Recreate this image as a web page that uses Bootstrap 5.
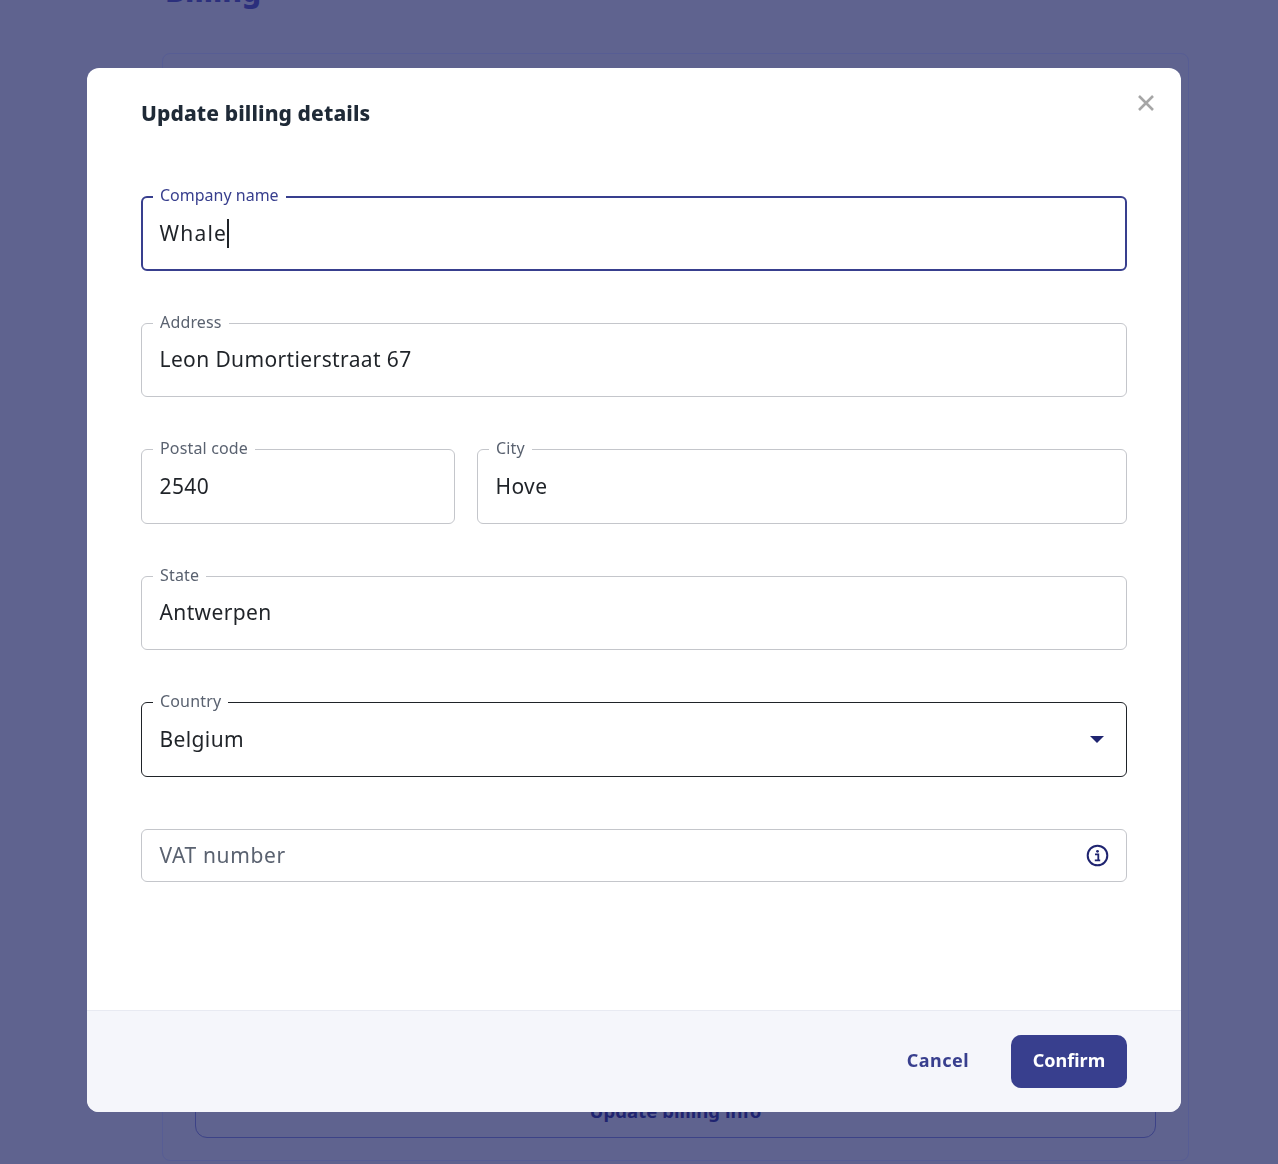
<!DOCTYPE html>
<html lang="en">
<head>
<meta charset="utf-8">
<title>Update billing details</title>
<link rel="stylesheet" href="https://cdn.jsdelivr.net/npm/bootstrap@5.3.0/dist/css/bootstrap.min.css">
<style>
html,body{height:1164px;overflow:hidden}
body{background:#5f638f;font-family:"Noto Sans","Liberation Sans",sans-serif;color:#1f2328}
.under{padding:0 89px 0 162px;height:1164px;display:flex;flex-direction:column}
.under-title{font-size:30px;font-weight:800;color:#2b2f7c;line-height:40px;height:40px;margin:-29px 0 42px 3px}
.under-card{height:1108px;border:1px solid #575d94;border-radius:8px;padding:0 32px 22px;display:flex;flex-direction:column;justify-content:flex-end}
.under-btn{height:54px;border:1px solid #3c4287;border-radius:12px;display:flex;justify-content:center;color:#1f2470;font-weight:700;font-size:18.5px;background:transparent;padding-top:12px;letter-spacing:.05px}
.bill-wrap{background:transparent}
.bill-dialog{width:1094px;max-width:none;margin:68px 0 0 87px}
.bill-content{border:0;border-radius:12px;height:1044px;overflow:hidden;background:#fff}
.bill-head{padding:31px 54px 0;border:0;height:128px;align-items:flex-start;display:block}
.bill-title{font-size:21px;font-weight:800;color:#1f2a37;line-height:28px;margin:0;letter-spacing:.1px}
.bill-x{position:absolute;top:21px;right:26px;width:18px;height:18px;border:0;background:none;padding:0;display:block}
.bill-body{padding:0 54px;flex:1 1 auto}
.fld{position:relative;height:74.5px;margin-bottom:52px;border:1px solid #c4c6cb;border-radius:6px;display:flex;align-items:center;padding:0 17.5px;font-size:21px;color:#1f2328;letter-spacing:.38px}
.fld-label{position:absolute;top:-11px;left:11px;padding:0 7px;background:#fff;font-size:16px;line-height:18px;color:#5a6270;letter-spacing:.16px}
.fld-focus{border:2px solid #383f8e;padding:0 16.5px}
.fld-focus .fld-label{color:#383f8e;left:10px;top:-12px;letter-spacing:0}
.val-wide{letter-spacing:1.2px}
.fld-dark{border-color:#1f2328}
.fld-vat{height:53px;margin:0;color:#5a6270;padding-top:1px;letter-spacing:.65px}
.caret-bar{display:inline-block;width:2px;height:29px;background:#1f2328;margin-left:0}
.fld-end{margin-left:auto;display:flex;margin-right:-.5px}
.fld-tri{margin-left:auto;margin-right:4.5px;width:0;height:0;border-left:7px solid transparent;border-right:7px solid transparent;border-top:7px solid #1f2470}
.bill-foot{height:102px;background:#f5f6fb;border-top:1px solid #e8eaf2;border-radius:0;padding:0 54px 0 0;display:flex;justify-content:flex-end;align-items:flex-start;flex-wrap:nowrap;gap:0}
.btn-cancel{font-weight:700;font-size:18px;color:#383f8e;background:none;border:0;margin:24px 42px 0 0;padding:0 0 2px;height:53px;letter-spacing:.45px}
.btn-confirm{font-weight:700;font-size:18px;color:#fff;background:#383f8e;border:0;border-radius:10px;width:116px;height:53px;margin:24px 0 0;padding:0 0 2px}
.btn-cancel:hover{color:#383f8e}.btn-confirm:hover{color:#fff;background:#383f8e}
.pc-col{width:314px}.city-col{margin-left:22px}
</style>
</head>
<body>
<div class="under">
  <div class="under-title">Billing</div>
  <div class="under-card">
    <div class="under-btn">Update billing info</div>
  </div>
</div>
<div class="modal d-block bill-wrap" tabindex="-1" role="dialog">
  <div class="modal-dialog bill-dialog">
    <div class="modal-content bill-content">
      <div class="modal-header bill-head">
        <h5 class="modal-title bill-title">Update billing details</h5>
        <button type="button" class="bill-x" aria-label="Close">
          <svg width="18" height="18" viewBox="0 0 18 18"><path d="M2 2 16 16M16 2 2 16" stroke="#a6a6a6" stroke-width="2.6" fill="none"/></svg>
        </button>
      </div>
      <div class="modal-body bill-body">
        <div class="fld fld-focus"><span class="fld-label">Company name</span><span class="val-wide">Whale</span><span class="caret-bar"></span></div>
        <div class="fld"><span class="fld-label">Address</span><span>Leon Dumortierstraat 67</span></div>
        <div class="row g-0">
          <div class="col-auto pc-col"><div class="fld"><span class="fld-label">Postal code</span><span>2540</span></div></div>
          <div class="col city-col"><div class="fld"><span class="fld-label">City</span><span>Hove</span></div></div>
        </div>
        <div class="fld"><span class="fld-label">State</span><span>Antwerpen</span></div>
        <div class="fld fld-dark"><span class="fld-label">Country</span><span>Belgium</span><span class="fld-tri"></span></div>
        <div class="fld fld-vat"><span>VAT number</span>
          <span class="fld-end"><svg width="23" height="23" viewBox="0 0 23 23" fill="none"><circle cx="11.5" cy="11.5" r="9.8" stroke="#1f2470" stroke-width="2"/><circle cx="11.5" cy="7.3" r="1.4" fill="#1f2470"/><path d="M9 10.4h3.3v5.6M8.8 16.4h5.4" stroke="#1f2470" stroke-width="1.8"/></svg></span>
        </div>
      </div>
      <div class="modal-footer bill-foot">
        <button type="button" class="btn btn-cancel">Cancel</button>
        <button type="button" class="btn btn-confirm">Confirm</button>
      </div>
    </div>
  </div>
</div>
</body>
</html>
